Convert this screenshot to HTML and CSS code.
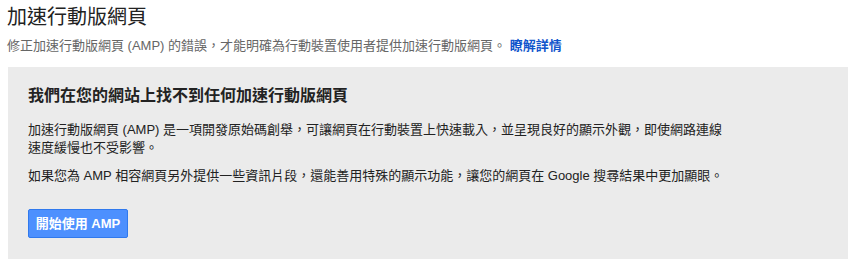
FILE: index.html
```html
<!DOCTYPE html>
<html lang="zh-Hant">
<head>
<meta charset="utf-8">
<title>加速行動版網頁</title>
<link rel="stylesheet" href="styles.css">
</head>
<body>
<div class="page">
  <h1 class="title">加速行動版網頁</h1>
  <p class="subtitle">修正加速行動版網頁 (AMP) 的錯誤，才能明確為行動裝置使用者提供加速行動版網頁。 <a class="link" href="#">瞭解詳情</a></p>
  <section class="panel">
    <h2 class="panel-heading">我們在您的網站上找不到任何加速行動版網頁</h2>
    <p class="panel-text first">加速行動版網頁 (AMP) 是一項開發原始碼創舉，可讓網頁在行動裝置上快速載入，並呈現良好的顯示外觀，即使網路連線速度緩慢也不受影響。</p>
    <p class="panel-text">如果您為 AMP 相容網頁另外提供一些資訊片段，還能善用特殊的顯示功能，讓您的網頁在 Google 搜尋結果中更加顯眼。</p>
    <a class="btn" href="#">開始使用 AMP</a>
  </section>
</div>
</body>
</html>
```

FILE: styles.css
```css
html, body {
  margin: 0;
  padding: 0;
  background: #ffffff;
}

body {
  font-family: "Liberation Sans", Arial, "Noto Sans CJK TC", sans-serif;
  color: #222222;
}

.page {
  padding: 0 18px 0 8px;
}

.title {
  margin: 5px 0 0 -1px;
  font-size: 20px;
  line-height: 24px;
  font-weight: normal;
  color: #222222;
}

.subtitle {
  margin: 8px 0 0 -1px;
  font-size: 13px;
  line-height: 18px;
  color: #666666;
}

.link {
  color: #1155cc;
  text-decoration: none;
  font-weight: bold;
}

.panel {
  margin-top: 12px;
  background: #ebebeb;
  padding: 20px 20px 30px;
  min-height: 200px;
  box-sizing: border-box;
}

.panel-heading {
  margin: 0;
  font-size: 16px;
  line-height: 18px;
  font-weight: bold;
  color: #222222;
}

.panel-text {
  margin: 10px 0 0;
  max-width: 700px;
  font-size: 13px;
  line-height: 18px;
  color: #222222;
}

.panel-text.first {
  margin-top: 16px;
}

.btn {
  display: inline-block;
  margin-top: 24px;
  width: 100px;
  height: 29px;
  box-sizing: border-box;
  border: 1px solid #3079ed;
  border-radius: 2px;
  background: #4d90fe;
  color: #ffffff;
  font-size: 13px;
  font-weight: bold;
  line-height: 27px;
  text-align: center;
  text-decoration: none;
}
```
